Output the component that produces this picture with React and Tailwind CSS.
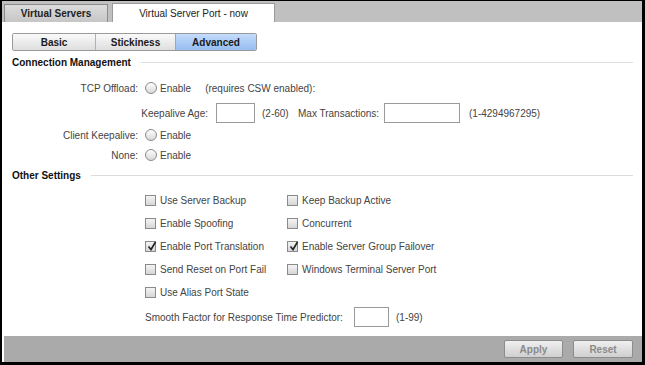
import React from "react";

const font = { fontFamily: '"Liberation Sans", Arial, sans-serif' };

function Radio() {
  return (
    <span className="inline-block w-[12px] h-[12px] rounded-full border border-[#8a8a8a] bg-gradient-to-b from-[#ffffff] to-[#d8d8d8] shrink-0" />
  );
}

function Check({ checked }) {
  return (
    <span className="relative inline-block w-[11px] h-[11px] border border-[#8a8a8a] bg-gradient-to-b from-[#f4f4f4] to-[#d6d6d6] shrink-0">
      {checked && (
        <svg className="absolute left-[1px] top-[-1px]" width="10" height="11" viewBox="0 0 10 11">
          <path d="M1.5 5.5 L4 8.5 L8.5 1" fill="none" stroke="#222" strokeWidth="1.6" />
        </svg>
      )}
    </span>
  );
}

function CheckItem({ checked, label }) {
  return (
    <div className="flex items-center gap-[4px] w-[142px] whitespace-nowrap">
      <Check checked={checked} />
      <span>{label}</span>
    </div>
  );
}

function Section({ title, className }) {
  return (
    <div className={"flex items-center h-[14px] " + className}>
      <span className="font-bold text-[#111]">{title}</span>
      <span className="flex-1 h-px bg-[#dcdcdc] ml-[10px]" />
    </div>
  );
}

function Input({ w }) {
  return <span className={"block h-[20px] border border-[#9a9a9a] bg-white " + w} />;
}

export default function App() {
  return (
    <div
      className="w-[645px] h-[365px] bg-black border-t border-l-2 border-r-[3px] border-b-[3px] border-black text-[10px] text-[#444] flex flex-col whitespace-nowrap"
      style={font}
    >
      {/* tab bar */}
      <div className="h-[21px] bg-[#c0c0c0] flex items-end pl-[2px] gap-[4px] shrink-0">
        <div className="w-[104px] h-[18px] border border-b-0 border-[#8c8c8c] bg-gradient-to-b from-[#dcdcdc] to-[#c6c6c6] flex items-center justify-center font-bold text-[#222]">
          Virtual Servers
        </div>
        <div className="w-[163px] h-[19px] border border-b-0 border-[#9a9a9a] bg-white flex items-center justify-center text-[#222]">
          Virtual Server Port - now
        </div>
      </div>

      {/* content */}
      <div className="flex-1 bg-white pl-[10px] pr-[9px] flex flex-col">
        {/* segmented */}
        <div className="mt-[11px] flex h-[18px] w-[245px] border border-[#9a9a9a] rounded-[2px] overflow-hidden font-bold text-[#1a1a1a]">
          <div className="w-[83px] flex items-center justify-center bg-gradient-to-b from-[#fafafa] to-[#dedede] border-r border-[#b0b0b0]">Basic</div>
          <div className="w-[80px] flex items-center justify-center bg-gradient-to-b from-[#fafafa] to-[#dedede] border-r border-[#8aa8d8]">Stickiness</div>
          <div className="flex-1 flex items-center justify-center bg-gradient-to-b from-[#c4dbfb] to-[#97bdf2]">Advanced</div>
        </div>

        <Section title="Connection Management" className="mt-[4px]" />

        {/* TCP Offload */}
        <div className="mt-[9px] h-[20px] flex items-center">
          <span className="w-[126px] text-right">TCP Offload:</span>
          <span className="ml-[7px] flex items-center gap-[3px]"><Radio /><span>Enable</span></span>
          <span className="ml-[14px]">(requires CSW enabled):</span>
        </div>

        {/* Keepalive */}
        <div className="mt-[5px] h-[20px] flex items-center">
          <span className="w-[196px] text-right">Keepalive Age:</span>
          <span className="ml-[8px]"><Input w="w-[39px]" /></span>
          <span className="ml-[7px] w-[36px]">(2-60)</span>
          <span className="w-[86px]">Max Transactions:</span>
          <span><Input w="w-[76px]" /></span>
          <span className="ml-[9px]">(1-4294967295)</span>
        </div>

        <div className="mt-[2px] h-[20px] flex items-center">
          <span className="w-[126px] text-right">Client Keepalive:</span>
          <span className="ml-[7px] flex items-center gap-[3px]"><Radio /><span>Enable</span></span>
        </div>
        <div className="h-[20px] flex items-center">
          <span className="w-[126px] text-right">None:</span>
          <span className="ml-[7px] flex items-center gap-[3px]"><Radio /><span>Enable</span></span>
        </div>

        <Section title="Other Settings" className="mt-[3px]" />

        <div className="mt-[7px] pl-[133px] flex flex-col">
          <div className="h-[23px] flex items-center">
            <CheckItem label="Use Server Backup" />
            <CheckItem label="Keep Backup Active" />
          </div>
          <div className="h-[23px] flex items-center">
            <CheckItem label="Enable Spoofing" />
            <CheckItem label="Concurrent" />
          </div>
          <div className="h-[23px] flex items-center">
            <CheckItem checked label="Enable Port Translation" />
            <CheckItem checked label="Enable Server Group Failover" />
          </div>
          <div className="h-[23px] flex items-center">
            <CheckItem label="Send Reset on Port Fail" />
            <CheckItem label="Windows Terminal Server Port" />
          </div>
          <div className="h-[23px] flex items-center">
            <CheckItem label="Use Alias Port State" />
          </div>
          <div className="mt-[3px] h-[20px] flex items-center">
            <span className="w-[200px]">Smooth Factor for Response Time Predictor:</span>
            <span className="ml-[9px]"><Input w="w-[35px]" /></span>
            <span className="ml-[7px]">(1-99)</span>
          </div>
        </div>
      </div>

      {/* footer */}
      <div className="h-[26px] shrink-0 bg-white pl-[2px]">
        <div className="h-full bg-[#aaaaaa] flex items-center justify-end gap-[10px] pr-[9px]">
          <div className="w-[59px] h-[18px] border border-[#8c8c8c] rounded-[2px] bg-gradient-to-b from-[#f0f0f0] to-[#cfcfcf] flex items-center justify-center font-bold text-[#8a8a8a]">Apply</div>
          <div className="w-[60px] h-[18px] border border-[#8c8c8c] rounded-[2px] bg-gradient-to-b from-[#f0f0f0] to-[#cfcfcf] flex items-center justify-center font-bold text-[#8a8a8a]">Reset</div>
        </div>
      </div>
    </div>
  );
}
